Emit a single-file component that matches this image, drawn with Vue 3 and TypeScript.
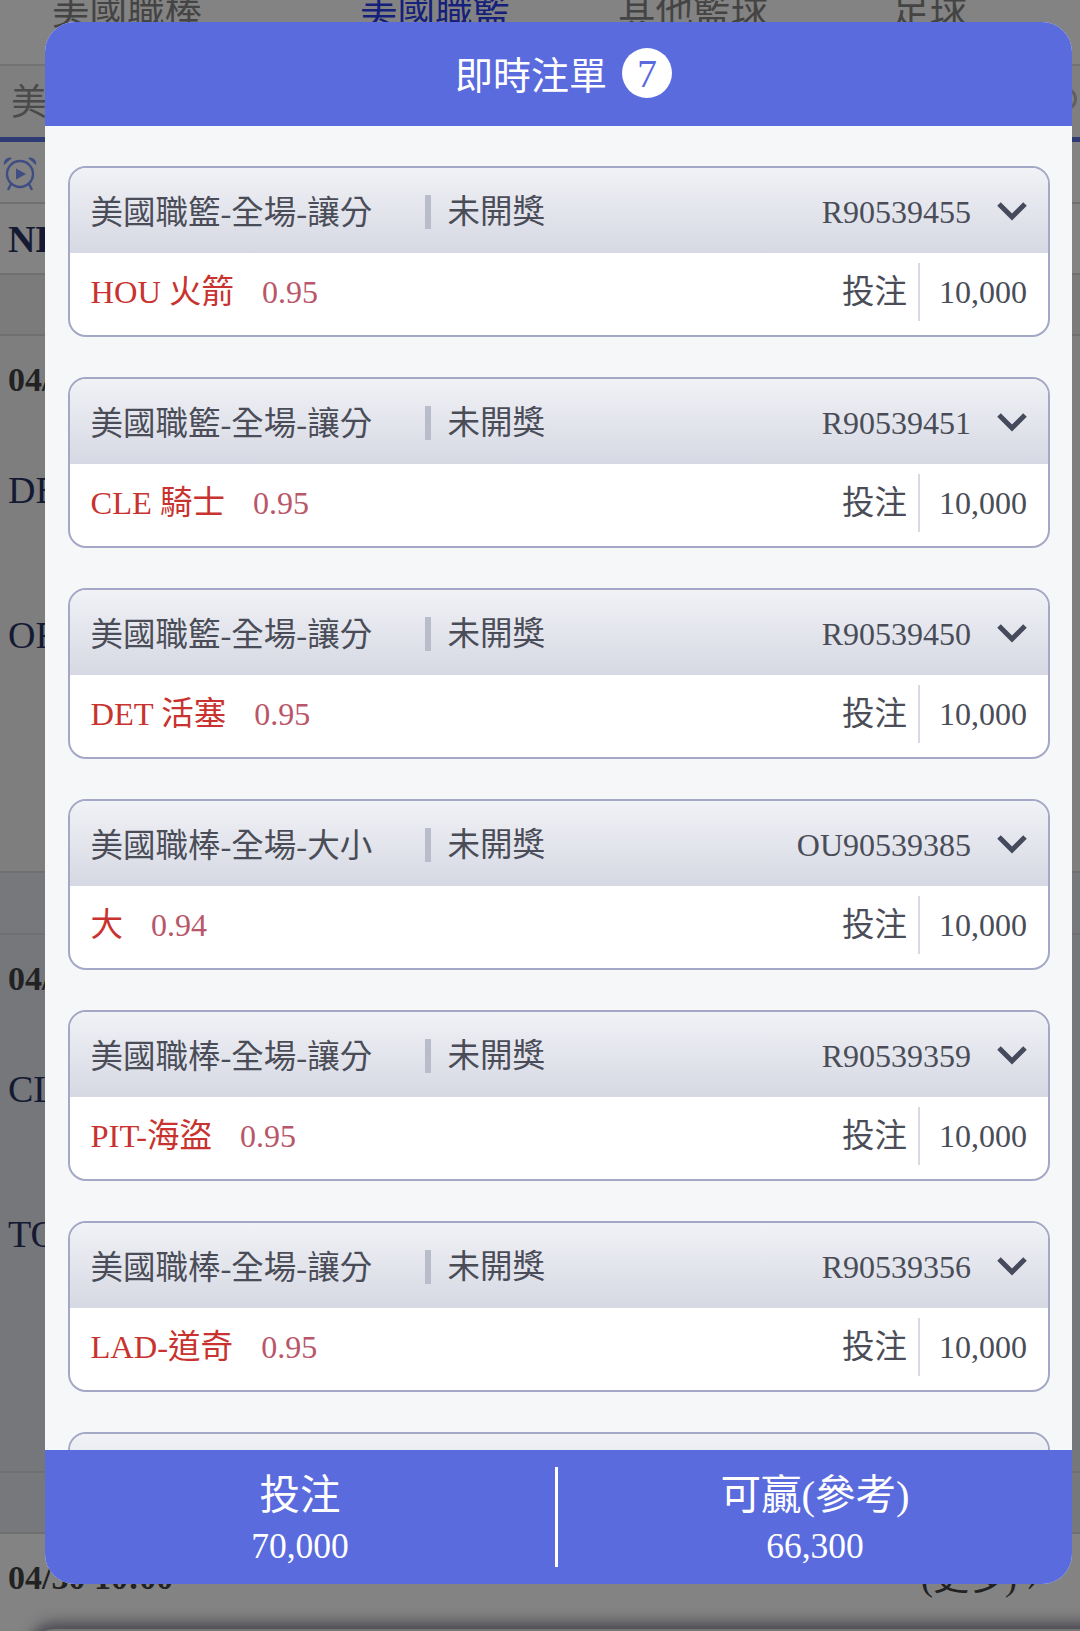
<script setup lang="ts">
interface Bet { title: string; id: string; pick: string; odds: string; amount: string }
const bets: Bet[] = [
  { title: '美國職籃-全場-讓分', id: 'R90539455', pick: 'HOU 火箭', odds: '0.95', amount: '10,000' },
  { title: '美國職籃-全場-讓分', id: 'R90539451', pick: 'CLE 騎士', odds: '0.95', amount: '10,000' },
  { title: '美國職籃-全場-讓分', id: 'R90539450', pick: 'DET 活塞', odds: '0.95', amount: '10,000' },
  { title: '美國職棒-全場-大小', id: 'OU90539385', pick: '大', odds: '0.94', amount: '10,000' },
  { title: '美國職棒-全場-讓分', id: 'R90539359', pick: 'PIT-海盜', odds: '0.95', amount: '10,000' },
  { title: '美國職棒-全場-讓分', id: 'R90539356', pick: 'LAD-道奇', odds: '0.95', amount: '10,000' },
  { title: '', id: '', pick: '', odds: '', amount: '' }
]
const tabs = ['美國職棒', '美國職籃', '其他籃球', '足球']
</script>

<template>
  <div class="page">
    <div class="bg">
      <div class="tabs">
        <span v-for="(t, i) in tabs" :key="t" :class="['tab', 'tab-' + i]">{{ t }}</span>
      </div>
      <div class="sub"><span>美</span><i class="ring"></i></div>
      <div class="icon-row">
        <svg width="34" height="34" viewBox="0 0 34 34" fill="none" stroke="#3f4d82" stroke-width="2.4">
          <circle cx="17" cy="17" r="13" />
          <path d="M13 11.5 L23 17 L13 22.5 Z" fill="#3f4d82" stroke="none" />
          <path d="M1 8 A6 6 0 0 1 9 1 Z M33 8 A6 6 0 0 0 25 1 Z" fill="#3f4d82" stroke="none" />
          <path d="M8 27 L5 33 M26 27 L29 33" />
        </svg>
      </div>
      <div class="row league">NBA</div>
      <div class="row blank"></div>
      <div class="game">
        <div class="date">04/30</div>
        <div class="team home">DET</div>
        <div class="team away">ORL</div>
      </div>
      <div class="row blank b2"></div>
      <div class="game g2">
        <div class="date">04/30</div>
        <div class="team home">CLE</div>
        <div class="team away">TOR</div>
      </div>
      <div class="row blank b3"></div>
      <div class="last"><b>04/30 10:00</b><span>(更多) ›</span></div>
    </div>
    <div class="dock"></div>

    <div class="modal">
      <header class="m-head">
        <span>即時注單</span>
        <i class="count">7</i>
      </header>
      <div class="list">
        <article v-for="(b, i) in bets" :key="i" class="card">
          <div class="c-head">
            <span class="c-title">{{ b.title }}</span>
            <span class="c-status">未開獎</span>
            <span class="c-id">{{ b.id }}</span>
            <svg class="chev" width="30" height="20" viewBox="0 0 30 20" fill="none" stroke="#454a5c" stroke-width="5">
              <path d="M2 3 L15 16 L28 3" />
            </svg>
          </div>
          <div class="c-body">
            <span class="pick">{{ b.pick }}</span>
            <span class="odds">{{ b.odds }}</span>
            <span class="lbl">投注</span>
            <span class="amt">{{ b.amount }}</span>
          </div>
        </article>
      </div>
      <footer class="m-foot">
        <div class="cell"><span>投注</span><b>70,000</b></div>
        <div class="cell sep"><span>可贏(參考)</span><b>66,300</b></div>
      </footer>
    </div>
  </div>
</template>

<style>
html, body { margin: 0; background: #808080; }
</style>

<style scoped>
.page {
  position: relative;
  width: 1080px;
  height: 1631px;
  overflow: hidden;
  background: #838383;
  font-family: "Liberation Serif", "Noto Sans CJK TC", serif;
}
.bg { height: 100%; color: #151a33; }
.tabs { height: 66px; position: relative; border-bottom: 2px solid #737373; box-sizing: border-box; }
.tab { position: absolute; top: -8px; font-size: 37.5px; line-height: 40px; color: #444; white-space: nowrap; }
.tab-0 { left: 52px; }
.tab-1 { left: 360px; color: #14207a; }
.tab-2 { left: 618px; }
.tab-3 { left: 892px; }
.sub {
  height: 76px;
  box-sizing: border-box;
  border-bottom: 5px solid #2e3a73;
  font-size: 36px;
  color: #4a4a4a;
  padding: 0 3px 5px 11px;
  background: #7f7f7f;
  display: flex;
  align-items: center;
  justify-content: space-between;
}
.ring { width: 24px; height: 24px; box-sizing: border-box; border: 3px solid #5f5f6a; border-radius: 50%; }
.icon-row { height: 62px; box-sizing: border-box; padding: 15px 0 0 3px; border-bottom: 2px solid #707070; }
.row { box-sizing: border-box; border-bottom: 2px solid #707070; }
.league { height: 71px; font-weight: 700; font-size: 38px; line-height: 70px; padding: 0 8px; }
.blank { height: 61px; background: #7b7b7b; }
.game { height: 537px; position: relative; border-bottom: 2px solid #707070; box-sizing: border-box; background: #7e7e7e; }
.g2 { height: 538px; background: #76777b; }
.b2 { height: 62px; background: #77787b; }
.b3 { background: #77787b; }
.date { position: absolute; left: 8px; top: 25px; font-weight: 700; font-size: 34px; color: #222; }
.team { position: absolute; left: 8px; font-size: 38px; }
.team.home { top: 132px; }
.team.away { top: 277px; }
.last {
  box-sizing: border-box;
  height: 97px;
  padding: 24px 42px 0 8px;
  display: flex;
  justify-content: space-between;
  font-size: 34px;
  line-height: 40px;
  color: #222;
}
.last span { font-size: 36px; }
.dock {
  position: absolute;
  left: 30px;
  right: -30px;
  top: 1629px;
  height: 30px;
  border-radius: 24px 0 0 0;
  background: #767676;
  box-shadow: 0 -6px 14px rgba(50, 50, 62, 0.75);
}

.modal {
  position: absolute;
  left: 45px;
  top: 22px;
  width: 1027px;
  height: 1562px;
  border-radius: 30px;
  overflow: hidden;
  background: #f6f7f9;
  display: flex;
  flex-direction: column;
}
.m-head {
  flex: none;
  height: 104px;
  box-sizing: border-box;
  padding: 0 0 3px 10px;
  background: #5a6bde;
  color: #fff;
  display: flex;
  align-items: center;
  justify-content: center;
  gap: 15px;
  font-size: 38px;
}
.count {
  width: 50px;
  height: 50px;
  box-sizing: border-box;
  padding-top: 2px;
  border-radius: 50%;
  background: #fff;
  color: #5a6bde;
  font-style: normal;
  font-size: 40px;
  display: flex;
  align-items: center;
  justify-content: center;
}
.list {
  flex: 1;
  min-height: 0;
  overflow: hidden;
  padding: 40px 22px 0 23px;
  display: flex;
  flex-direction: column;
  gap: 40px;
}
.card {
  flex: none;
  height: 171px;
  box-sizing: border-box;
  border: 2.5px solid #a4a8c6;
  border-radius: 18px;
  overflow: hidden;
  background: #fff;
}
.c-head {
  height: 85px;
  box-sizing: border-box;
  background: linear-gradient(#f1f2f6, #d6d8e3);
  display: flex;
  align-items: baseline;
  padding: 25px 21px 0 20.5px;
  color: #4a4d58;
  font-size: 32.5px;
  line-height: 40px;
}
.c-title { width: 334px; flex: none; white-space: nowrap; }
.c-status { flex: none; border-left: 6px solid #b9bcca; padding-left: 17px; line-height: 34px; white-space: nowrap; position: relative; top: -1px; }
.c-id { margin-left: auto; font-size: 32px; position: relative; top: -1px; }
.chev { margin-left: 26px; flex: none; align-self: flex-start; margin-top: 8px; }
.c-body {
  height: 81px;
  box-sizing: border-box;
  display: flex;
  align-items: baseline;
  padding: 10px 21px 0 20.5px;
  font-size: 32px;
}
.pick { color: #c8332f; white-space: nowrap; font-size: 32.5px; }
.odds { color: #b9566a; margin-left: 28px; }
.lbl { margin-left: auto; color: #4a4d58; font-size: 32.5px; padding-right: 11px; border-right: 2px solid #d8d9e2; line-height: 58px; }
.amt { color: #4a4d58; padding-left: 19px; }
.m-foot {
  flex: none;
  height: 134px;
  background: #5a6bde;
  color: #fff;
  display: grid;
  grid-template-columns: 510px 517px;
  align-items: center;
}
.cell {
  display: flex;
  flex-direction: column;
  align-items: center;
  height: 100px;
  padding-top: 7px;
  justify-content: center;
  box-sizing: border-box;
}
.cell span { font-size: 40.5px; line-height: 50px; }
.cell b { font-weight: 400; font-size: 35.5px; line-height: 50px; }
.sep { border-left: 3px solid #fff; }
</style>
